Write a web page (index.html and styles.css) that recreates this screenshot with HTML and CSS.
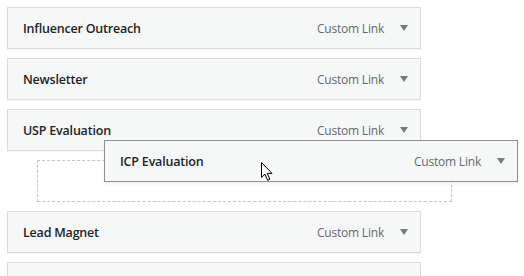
FILE: index.html
```html
<!DOCTYPE html>
<html>

<head>
    <meta charset="utf-8">
    <title>Menu structure</title>
    <link rel="stylesheet" href="styles.css">
</head>

<body>
    <ul class="menu">
        <li class="menu-item">
            <div class="item-bar">
                <span class="item-title">Influencer Outreach</span>
                <span class="item-controls"><span class="item-type">Custom Link</span><span class="item-arrow"></span></span>
            </div>
        </li>
        <li class="menu-item">
            <div class="item-bar">
                <span class="item-title">Newsletter</span>
                <span class="item-controls"><span class="item-type">Custom Link</span><span class="item-arrow"></span></span>
            </div>
        </li>
        <li class="menu-item">
            <div class="item-bar">
                <span class="item-title">USP Evaluation</span>
                <span class="item-controls"><span class="item-type">Custom Link</span><span class="item-arrow"></span></span>
            </div>
        </li>
        <li class="sortable-placeholder depth-1"></li>
        <li class="menu-item">
            <div class="item-bar">
                <span class="item-title">Lead Magnet</span>
                <span class="item-controls"><span class="item-type">Custom Link</span><span class="item-arrow"></span></span>
            </div>
        </li>
        <!-- next item, only its top edge is in view -->
        <li class="menu-item">
            <div class="item-bar"></div>
        </li>
    </ul>

    <!-- item being dragged -->
    <div class="drag-helper">
        <div class="item-bar">
            <span class="item-title">ICP Evaluation</span>
            <span class="item-controls"><span class="item-type">Custom Link</span><span class="item-arrow"></span></span>
        </div>
    </div>

    <svg class="cursor" width="13" height="20" viewBox="0 0 13 20">
        <path d="M0.5 0.5 L0.5 15.5 L4 12.2 L6.6 18.3 L8.8 17.3 L6.3 11.4 L11 11.4 Z" fill="#fff" stroke="#000" stroke-width="1" stroke-linejoin="miter"/>
    </svg>
</body>

</html>
```

FILE: styles.css
```css
* {
    box-sizing: border-box;
}

body {
    margin: 0;
    height: 276px;
    background: #fff;
    font-family: 'Open Sans', 'Noto Sans', sans-serif;
    overflow: hidden;
}

.menu {
    list-style: none;
    margin: 0;
    padding: 7px 0 0 7px;
    width: 421px;
}

.menu-item,
.sortable-placeholder {
    margin-bottom: 9px;
}

.item-bar {
    display: flex;
    align-items: center;
    justify-content: space-between;
    height: 42px;
    padding: 0 12px 0 15px;
    background: #f6f7f7;
    border: 1px solid #dcdcde;
    box-shadow: 0 1px 1px rgba(0, 0, 0, 0.04);
}

.item-title {
    font-size: 12.5px;
    font-weight: 600;
    color: #1d2327;
    letter-spacing: -0.2px;
}

.item-controls {
    display: flex;
    align-items: center;
}

.item-type {
    font-size: 12px;
    color: #646970;
    letter-spacing: -0.2px;
}

.item-arrow {
    width: 0;
    height: 0;
    margin-left: 16px;
    border-left: 4px solid transparent;
    border-right: 4px solid transparent;
    border-top: 6px solid #787c82;
}

.sortable-placeholder {
    height: 42px;
    margin-left: 30px;
    width: 415px;
    border: 1px dashed #c3c4c7;
}

.drag-helper {
    position: absolute;
    left: 104px;
    top: 140px;
    width: 414px;
}

.drag-helper .item-bar {
    border-color: #8c8f94;
    box-shadow: 0 2px 3px rgba(0, 0, 0, 0.06);
}

.cursor {
    position: absolute;
    left: 261px;
    top: 162px;
}
```
